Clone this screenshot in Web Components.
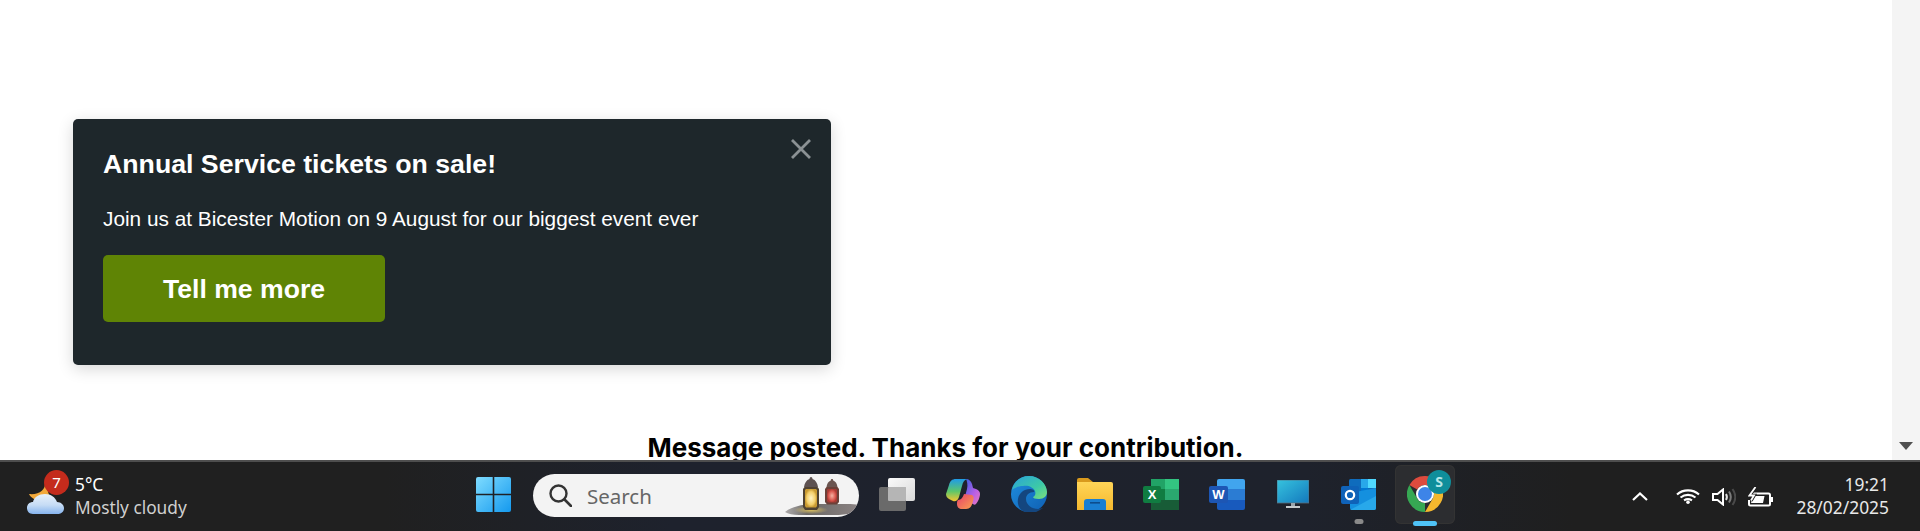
<!DOCTYPE html>
<html lang="en">
<head>
<meta charset="utf-8">
<title>Message posted</title>
<style>
html, body { margin: 0; height: 100%; overflow: hidden; background: #fff; }
body { display: flex; flex-direction: column; }
</style>
</head>
<body>
<page-view>
  <promo-card heading="Annual Service tickets on sale!" action="Tell me more">
    Join us at Bicester Motion on 9 August for our biggest event ever
  </promo-card>
  <flash-message>Message posted. Thanks for your contribution.</flash-message>
</page-view>
<task-bar>
  <weather-widget slot="left" temp="5°C" summary="Mostly cloudy" count="7"></weather-widget>
  <task-icon slot="center" name="start"></task-icon>
  <search-box slot="center"></search-box>
  <task-icon slot="center" name="taskview"></task-icon>
  <task-icon slot="center" name="copilot"></task-icon>
  <task-icon slot="center" name="edge"></task-icon>
  <task-icon slot="center" name="folder"></task-icon>
  <task-icon slot="center" name="excel"></task-icon>
  <task-icon slot="center" name="word"></task-icon>
  <task-icon slot="center" name="monitor"></task-icon>
  <task-icon slot="center" name="outlook" state="open"></task-icon>
  <task-icon slot="center" name="chrome" state="active" badge="S"></task-icon>
  <system-tray slot="right" time="19:21" date="28/02/2025"></system-tray>
</task-bar>

<script>
const pageTemplate = document.createElement("template");
pageTemplate.innerHTML = `
<style>
:host { display: flex; height: 460px; flex: none; overflow: hidden; background: #fff; }
.content { flex: 1; min-width: 0; padding: 119px 0 0 73px; box-sizing: border-box; }
.scrollbar { width: 28px; flex: none; background: #f4f4f4; display: flex; align-items: flex-end; justify-content: center; padding-bottom: 10px; box-sizing: border-box; }
</style>
<div class="content"><slot></slot></div>
<div class="scrollbar">
  <svg width="14" height="8" viewBox="0 0 14 8"><path d="M0 0h14L7 8z" fill="#505050"/></svg>
</div>
`;

customElements.define(
  "page-view",
  class extends HTMLElement {
    constructor() {
      super();
      this.attachShadow({ mode: "open" }).append(pageTemplate.content.cloneNode(true));
    }
  }
);

const promoTemplate = document.createElement("template");
promoTemplate.innerHTML = `
<style>
:host {
  display: block;
  width: 758px;
  height: 246px;
  box-sizing: border-box;
  padding: 29px 30px 0;
  background: #1e272b;
  border-radius: 5px;
  box-shadow: 0 4px 16px rgba(0, 0, 0, .16);
  color: #fff;
  font-family: "Liberation Sans", Arial, sans-serif;
  position: relative;
}
h2 { margin: 0; font-size: 26.7px; line-height: 32px; font-weight: 700; }
p { margin: 25px 0 0; font-size: 20.8px; line-height: 28px; }
button {
  display: block;
  margin-top: 22px;
  width: 282px;
  height: 67px;
  padding: 2px 0 0;
  border: 0;
  border-radius: 5px;
  background: #5f8405;
  color: #fff;
  font: 700 26.6px "Liberation Sans", Arial, sans-serif;
}
.close { position: absolute; top: 20px; right: 20px; width: 20px; height: 20px; }
</style>
<h2></h2>
<p><slot></slot></p>
<button type="button"></button>
<svg class="close" viewBox="0 0 20 20"><path d="M1 1l18 18M19 1L1 19" stroke="#8b9194" stroke-width="2.8" fill="none"/></svg>
`;

customElements.define(
  "promo-card",
  class extends HTMLElement {
    constructor() {
      super();
      const shadowRoot = this.attachShadow({ mode: "open" });
      shadowRoot.append(promoTemplate.content.cloneNode(true));
      shadowRoot.querySelector("h2").textContent = this.getAttribute("heading");
      shadowRoot.querySelector("button").textContent = this.getAttribute("action");
    }
  }
);

const flashTemplate = document.createElement("template");
flashTemplate.innerHTML = `
<style>
:host {
  display: block;
  width: 1745px;
  margin: 67px 0 0 0;
  text-align: center;
  font: 700 26px/32px Inter, "Liberation Sans", sans-serif;
  color: #000;
  white-space: nowrap;
}
</style>
<slot></slot>
`;

customElements.define(
  "flash-message",
  class extends HTMLElement {
    constructor() {
      super();
      this.attachShadow({ mode: "open" }).append(flashTemplate.content.cloneNode(true));
    }
  }
);

const barTemplate = document.createElement("template");
barTemplate.innerHTML = `
<style>
:host {
  display: grid;
  grid-template-columns: 460px 1fr auto;
  height: 71px;
  flex: none;
  box-sizing: border-box;
  border-top: 2px solid #4e4e4e;
  background: linear-gradient(90deg, #202020 0, #202020 20%, #1e222d 35%, #1e222c 68%, #1f1f1f 82%, #1f1f1f 100%);
  color: #fff;
  font-family: "Noto Sans", "Open Sans", sans-serif;
}
.center { display: flex; align-items: stretch; }
</style>
<div><slot name="left"></slot></div>
<div class="center"><slot name="center"></slot></div>
<div><slot name="right"></slot></div>
`;

customElements.define(
  "task-bar",
  class extends HTMLElement {
    constructor() {
      super();
      this.attachShadow({ mode: "open" }).append(barTemplate.content.cloneNode(true));
    }
  }
);

const weatherTemplate = document.createElement("template");
weatherTemplate.innerHTML = `
<style>
:host { display: flex; align-items: center; height: 69px; padding-left: 27px; position: relative; }
svg { width: 37px; height: 33px; flex: none; margin-top: 1px; }
.badge {
  position: absolute; left: 44px; top: 8px; width: 25px; height: 25px; border-radius: 50%;
  background: #c42b1c; color: #fff; font-size: 15px; line-height: 25px; text-align: center;
}
.text { margin-left: 11px; display: flex; flex-direction: column; font-size: 17.3px; line-height: 23px; margin-top: -1px; }
.summary { color: #d0d0d0; }
</style>
<svg viewBox="0 0 37 33">
  <defs><linearGradient id="cloud" x1="0" y1="0" x2="0" y2="1"><stop offset="0" stop-color="#e8f1fb"/><stop offset=".55" stop-color="#c6dcf5"/><stop offset="1" stop-color="#86b4ee"/></linearGradient></defs>
  <path d="M18 1c1 8-6 13-16 12 3 6 12 9 21 4z" fill="#f2a93b"/>
  <path d="M6 33c-4 0-6-3-6-6 0-4 3-6 6-6 1-5 6-8 12-8 6 0 10 3 12 8 4 0 7 3 7 6 0 4-3 6-7 6z" fill="url(#cloud)"/>
</svg>
<div class="badge"></div>
<div class="text"><span class="temp"></span><span class="summary"></span></div>
`;

customElements.define(
  "weather-widget",
  class extends HTMLElement {
    constructor() {
      super();
      const shadowRoot = this.attachShadow({ mode: "open" });
      shadowRoot.append(weatherTemplate.content.cloneNode(true));
      shadowRoot.querySelector(".temp").textContent = this.getAttribute("temp");
      shadowRoot.querySelector(".summary").textContent = this.getAttribute("summary");
      shadowRoot.querySelector(".badge").textContent = this.getAttribute("count");
    }
  }
);

const searchTemplate = document.createElement("template");
searchTemplate.innerHTML = `
<style>
:host {
  display: flex; align-items: center; flex: none; position: relative; overflow: hidden;
  width: 326px; height: 43px; margin: 12px 5px 0 7px; padding-left: 16px; box-sizing: border-box;
  border-radius: 22px; background: #f3f3f3;
  color: #666; font-size: 20.5px;
}
.glass { width: 23px; height: 23px; flex: none; }
span { margin-left: 15px; }
.lanterns { position: absolute; right: 0; top: 1px; width: 74px; height: 42px; }
</style>
<svg class="glass" viewBox="0 0 23 23"><circle cx="9.5" cy="9.5" r="8" fill="none" stroke="#333" stroke-width="2.4"/><path d="M15.5 15.5l6.5 6.5" stroke="#333" stroke-width="2.6" stroke-linecap="round"/></svg>
<span>Search</span>
<svg class="lanterns" viewBox="0 -7 74 42">
  <defs>
    <radialGradient id="lampA"><stop offset="0" stop-color="#fff3c4"/><stop offset=".7" stop-color="#f4cf6a"/><stop offset="1" stop-color="#c99a32"/></radialGradient>
    <radialGradient id="lampB"><stop offset="0" stop-color="#f6b3a4"/><stop offset=".7" stop-color="#d9574e"/><stop offset="1" stop-color="#a83a34"/></radialGradient>
    <linearGradient id="floor" x1="0" y1="0" x2="1" y2="0"><stop offset="0" stop-color="#8d8a8a" stop-opacity=".7"/><stop offset=".3" stop-color="#6b6866"/><stop offset="1" stop-color="#8a8282"/></linearGradient>
    <radialGradient id="glow"><stop offset="0" stop-color="#e7c95e" stop-opacity=".9"/><stop offset="1" stop-color="#e7c95e" stop-opacity="0"/></radialGradient>
  </defs>
  <path d="M0 30c7-6 20-8 30-8h31c6 0 10 0 12 1-2 4-6 8-10 9-6 1-12 1-20 1H14C8 33 3 32 0 30z" fill="url(#floor)"/>
  <ellipse cx="26" cy="28" rx="17" ry="4" fill="url(#glow)"/>
  <path d="M26 -5c1 0 1.500 1 1.500 2 3 1 5 4 5.500 8H19c.5-4 2.500-7 5.500-8 0-1 .5-2 1.500-2z" fill="#5d5150"/>
  <path d="M19.500 5h13l1.500 2v18l-2 3H20l-2-3V7z" fill="#4f4232"/>
  <path d="M21 7h10l1 1v16l-1 1.500H21l-1-1.500V8z" fill="url(#lampA)"/>
  <path d="M47 -3c1 0 1.200.7 1.200 1.500 2.500 1 3.800 3 4.300 6.500H41.500c.5-3.500 1.800-5.500 4.300-6.500C45.800 -2.300 46-3 47-3z" fill="#6b5550"/>
  <path d="M41.500 5h11l1.500 2v13l-2 2.500H42L40 20V7z" fill="#6b4038"/>
  <path d="M43 7h8l1 1v11l-1.500 1.500h-7L42 19V8z" fill="url(#lampB)"/>
</svg>
`;

customElements.define(
  "search-box",
  class extends HTMLElement {
    constructor() {
      super();
      this.attachShadow({ mode: "open" }).append(searchTemplate.content.cloneNode(true));
    }
  }
);

const icons = {
  start: `<svg width="35" height="35" viewBox="0 0 35 35">
    <defs><linearGradient id="win" x1="0" y1="0" x2="1" y2="1"><stop offset="0" stop-color="#7fdcff"/><stop offset="1" stop-color="#1499ee"/></linearGradient></defs>
    <path d="M0 2a2 2 0 012-2h14.700v16.700H0zM18.300 0H33a2 2 0 012 2v14.700H18.300zM0 18.300h16.700V35H2a2 2 0 01-2-2zM18.300 18.300H35V33a2 2 0 01-2 2H18.300z" fill="url(#win)"/></svg>`,
  taskview: `<svg width="36" height="33" viewBox="0 0 36 33">
    <defs><linearGradient id="tvA" x1="0" y1="0" x2="1" y2="1"><stop offset="0" stop-color="#fafafa"/><stop offset="1" stop-color="#d9d9d9"/></linearGradient></defs>
    <rect x="9" y="0" width="27" height="23" rx="2" fill="url(#tvA)"/>
    <rect x="0" y="9" width="27" height="24" rx="2" fill="#6a6a6a"/>
    <rect x="9" y="9" width="18" height="14" rx="1" fill="#b5b5b5"/></svg>`,
  copilot: `<svg width="34" height="32" viewBox="0 0 34 32">
    <defs>
      <linearGradient id="copA" x1="0" y1="0" x2="0" y2="1"><stop offset="0" stop-color="#1f9be8"/><stop offset=".55" stop-color="#5cc66a"/><stop offset="1" stop-color="#f7c52f"/></linearGradient>
      <linearGradient id="copB" x1="0" y1="0" x2="1" y2="1"><stop offset="0" stop-color="#2f5fe0"/><stop offset=".6" stop-color="#b95fe6"/><stop offset="1" stop-color="#ea7ab8"/></linearGradient>
      <linearGradient id="copC" x1="0" y1="0" x2="1" y2="1"><stop offset="0" stop-color="#e63f6b"/><stop offset="1" stop-color="#fba24f"/></linearGradient>
    </defs>
    <path d="M10 1h11c-3 1-4 3-5 7l-3 11c-1 3-3 5-6 4l-4-2c-2-1-3-3-3-5l3-9c1-4 3-6 7-6z" fill="url(#copA)"/>
    <path d="M20 1c3 0 5 2 6 5l1 4 3 1c3 1 4 3 4 5 0 3-2 8-4 10-1 1-2 1-3 0l-9-4 3-11c1-4 0-8-1-10z" fill="url(#copB)"/>
    <path d="M12 22c3 0 5-3 6-6l8 1c2 1 2 3 1 6-1 5-3 8-7 8h-4c-3 0-5-2-5-5 0-2 0-3 1-4z" fill="url(#copC)"/></svg>`,
  edge: `<svg width="36" height="36" viewBox="0 0 36 36">
    <defs>
      <linearGradient id="edgeA" x1="0" y1="0" x2="1" y2="1"><stop offset="0" stop-color="#2aa3d8"/><stop offset=".6" stop-color="#3dc9a7"/><stop offset="1" stop-color="#7fe07a"/></linearGradient>
      <linearGradient id="edgeB" x1="0" y1="0" x2="1" y2="1"><stop offset="0" stop-color="#1f8fe0"/><stop offset="1" stop-color="#0f5fb2"/></linearGradient>
    </defs>
    <circle cx="18" cy="18" r="18" fill="url(#edgeB)"/>
    <path d="M1 14C3 5 10 0 18 0c10 0 18 8 18 16 0 4-3 7-8 7-4 0-6-1-6-2 2-1 3-3 2-6-2-4-7-6-12-5-5 0-9 2-11 4z" fill="url(#edgeA)"/>
    <path d="M14 36c-6-2-8-8-7-13 1-6 6-10 12-10 3 0 5 2 4 3-5 0-8 3-8 7 0 6 6 10 12 10 2 0 4-1 5-1-4 3-8 5-12 5-2 0-4 0-6-1z" fill="#14467f"/></svg>`,
  folder: `<svg width="36" height="32" viewBox="0 0 36 32">
    <defs><linearGradient id="fold" x1="0" y1="0" x2="0" y2="1"><stop offset="0" stop-color="#ffd557"/><stop offset="1" stop-color="#f5b82e"/></linearGradient></defs>
    <path d="M0 2a2 2 0 012-2h9l5 4H0z" fill="#d99a1d"/>
    <path d="M0 4h34a2 2 0 012 2v26H0z" fill="url(#fold)"/>
    <path d="M7 32V24a3 3 0 013-3h16a3 3 0 013 3v8z" fill="#1a7fd1"/>
    <rect x="13" y="24" width="10" height="1.6" fill="#0d4d8c"/></svg>`,
  excel: `<svg width="36" height="31" viewBox="0 0 36 31">
    <path d="M8 0h26a2 2 0 012 2v27a2 2 0 01-2 2H8z" fill="#21a366"/>
    <rect x="22" y="0" width="14" height="10" fill="#33c481"/>
    <rect x="8" y="10" width="14" height="11" fill="#107c41"/>
    <rect x="22" y="10" width="14" height="11" fill="#2aa86f"/>
    <rect x="8" y="21" width="28" height="10" fill="#185c37"/>
    <rect x="0" y="7" width="18" height="17" rx="2" fill="#107c41"/>
    <text x="9" y="20" font-family="Liberation Sans, sans-serif" font-weight="700" font-size="13" text-anchor="middle" fill="#fff">X</text></svg>`,
  word: `<svg width="36" height="31" viewBox="0 0 36 31">
    <path d="M8 2a2 2 0 012-2h24a2 2 0 012 2v8H8z" fill="#41a5ee"/>
    <rect x="8" y="10" width="28" height="11" fill="#2b7cd3"/>
    <path d="M8 21h28v8a2 2 0 01-2 2H10a2 2 0 01-2-2z" fill="#185abd"/>
    <rect x="0" y="7" width="19" height="17" rx="2" fill="#1d56b4"/>
    <text x="9.5" y="20" font-family="Liberation Sans, sans-serif" font-weight="700" font-size="13" text-anchor="middle" fill="#fff">W</text></svg>`,
  monitor: `<svg width="32" height="28" viewBox="0 0 32 28">
    <defs><linearGradient id="mon" x1="0" y1="0" x2="1" y2="1"><stop offset="0" stop-color="#36c3de"/><stop offset="1" stop-color="#1378bd"/></linearGradient></defs>
    <rect x="0" y="0" width="32" height="23" fill="url(#mon)" stroke="#5b6f7c" stroke-width=".8"/>
    <rect x="14" y="23" width="4" height="3" fill="#9aa4ab"/>
    <rect x="9" y="26" width="14" height="2" fill="#c4c9cc"/></svg>`,
  outlook: `<svg width="36" height="31" viewBox="0 0 36 31">
    <rect x="8" y="0" width="26" height="18" rx="1.5" fill="#0f6cbd"/>
    <rect x="20" y="0" width="7" height="9" fill="#28a8ea"/>
    <rect x="27" y="0" width="8" height="9" fill="#50d9ff"/>
    <rect x="20" y="9" width="7" height="9" fill="#0078d4"/>
    <path d="M9 14l26-5v20a2 2 0 01-2 2H11a2 2 0 01-2-2z" fill="#1490df"/>
    <path d="M9 31l26-14v12a2 2 0 01-2 2z" fill="#28a8ea"/>
    <rect x="0" y="7" width="18" height="18" rx="2" fill="#0f62b8"/>
    <circle cx="9" cy="16" r="4.2" fill="none" stroke="#fff" stroke-width="2.2"/></svg>`,
  chrome: `<svg width="36" height="36" viewBox="0 0 36 36">
    <path d="M2.410 9A18 18 0 0133.590 9H18a9 9 0 00-7.800 4.500z" fill="#dd4b3e"/>
    <path transform="rotate(120 18 18)" d="M2.410 9A18 18 0 0133.590 9H18a9 9 0 00-7.800 4.500z" fill="#f4b82e"/>
    <path transform="rotate(240 18 18)" d="M2.410 9A18 18 0 0133.590 9H18a9 9 0 00-7.800 4.500z" fill="#36a853"/>
    <circle cx="18" cy="18" r="9" fill="#fff"/><circle cx="18" cy="18" r="7" fill="#3d84e8"/></svg>`,
};

const iconTemplate = document.createElement("template");
iconTemplate.innerHTML = `
<style>
:host { display: flex; flex: none; width: 66px; height: 69px; align-items: center; justify-content: center; position: relative; }
.wrap { display: flex; align-items: center; justify-content: center; width: 60px; height: 59px; margin-top: -5px; border-radius: 6px; position: relative; }
svg { display: block; }
:host([state="active"]) .wrap { background: #2c2d30; box-shadow: inset 0 0 0 1px #333; }
.badge {
  display: none; position: absolute; left: 32px; top: 5px; width: 24px; height: 24px; border-radius: 50%;
  background: #0f8e9b; color: #b5e6e8; font-size: 14px; font-weight: 700; line-height: 24px; text-align: center;
}
:host([badge]) .badge { display: block; }
.mark { display: none; position: absolute; left: 50%; transform: translateX(-50%); }
:host([state="open"]) .mark { display: block; bottom: 7px; width: 9px; height: 5px; border-radius: 3px; background: #8a8a8a; }
:host([state="active"]) .mark { display: block; bottom: 5px; width: 24px; height: 5px; border-radius: 3px; background: #4fc3f7; }
</style>
<div class="wrap"><div class="glyph"></div><div class="badge"></div></div>
<div class="mark"></div>
`;

customElements.define(
  "task-icon",
  class extends HTMLElement {
    constructor() {
      super();
      const shadowRoot = this.attachShadow({ mode: "open" });
      shadowRoot.append(iconTemplate.content.cloneNode(true));
      shadowRoot.querySelector(".glyph").innerHTML = icons[this.getAttribute("name")];
      shadowRoot.querySelector(".badge").textContent = this.getAttribute("badge") || "";
    }
  }
);

const trayTemplate = document.createElement("template");
trayTemplate.innerHTML = `
<style>
:host { display: flex; align-items: center; height: 69px; padding-right: 31px; color: #fff; }
svg { display: block; flex: none; }
.chev { margin-right: 28px; }
.wifi { margin-right: 12px; }
.sound { margin-right: 12px; }
.clock { margin-left: 23px; display: flex; flex-direction: column; align-items: flex-end; font-size: 17.4px; line-height: 23px; color: #e8e8e8; margin-top: -1px; }
</style>
<svg class="chev" width="16" height="9" viewBox="0 0 16 9"><path d="M1 8l7-6.500L15 8" fill="none" stroke="#fff" stroke-width="2.200"/></svg>
<svg class="wifi" width="24" height="15" viewBox="0 0 24 15" fill="none" stroke="#fff" stroke-width="2.100">
  <path d="M1 5.500c6-5.500 16-5.500 22 0"/><path d="M4.500 8.500c4.500-3.500 10.500-3.500 15 0"/><path d="M8 11.300c2.500-1.500 5.500-1.500 8 0"/><circle cx="12" cy="13.200" r="1.800" fill="#fff" stroke="none"/></svg>
<svg class="sound" width="24" height="18" viewBox="0 0 24 18" fill="none" stroke="#fff" stroke-width="2">
  <path d="M1 6h4.500L11 1.500v15L5.500 12H1z"/><path d="M14 6c1.200 2 1.200 4 0 6" stroke="#e0e0e0"/><path d="M17 3.500c2.300 3.500 2.300 7.500 0 11" stroke="#7c7c7c"/><path d="M20.500 1c3.500 5 3.500 11 0 16" stroke="#4a4a4a"/></svg>
<svg width="25" height="20" viewBox="0 0 25 20" fill="none" stroke="#fff" stroke-width="2">
  <path d="M5 6.500h15.500a1.500 1.500 0 011.500 1.500v9a1.500 1.500 0 01-1.500 1.500H2.500A1.500 1.500 0 011 17v-4"/>
  <path d="M5 9h11.500L15 16H3z" fill="#fff" stroke="none"/>
  <rect x="23" y="10" width="2" height="5" fill="#fff" stroke="none"/>
  <path d="M7.500 0L1.500 8.500h4.500l-3 5" stroke="#1f1f1f" stroke-width="3.500"/>
  <path d="M7.500 0L1.500 8.500h4.500l-3 5" stroke-width="1.800"/></svg>
<div class="clock"><span class="time"></span><span class="date"></span></div>
`;

customElements.define(
  "system-tray",
  class extends HTMLElement {
    constructor() {
      super();
      const shadowRoot = this.attachShadow({ mode: "open" });
      shadowRoot.append(trayTemplate.content.cloneNode(true));
      shadowRoot.querySelector(".time").textContent = this.getAttribute("time");
      shadowRoot.querySelector(".date").textContent = this.getAttribute("date");
    }
  }
);
</script>
</body>
</html>
